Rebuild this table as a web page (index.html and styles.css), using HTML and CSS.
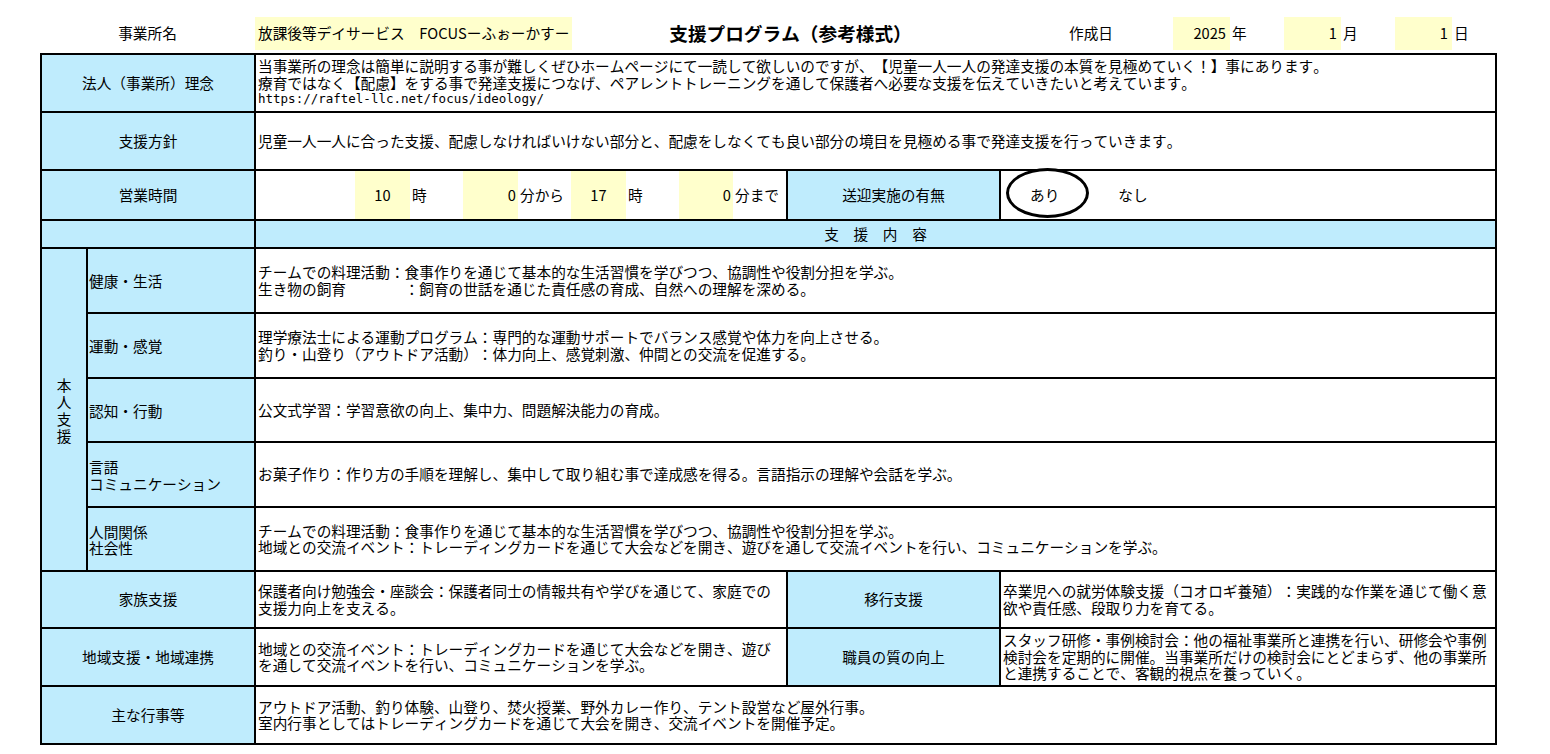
FILE: index.html
```html
<!DOCTYPE html>
<html lang="ja">
<head>
<meta charset="utf-8">
<title>支援プログラム（参考様式）</title>
<link rel="stylesheet" href="styles.css">
</head>
<body>
<div class="header">
  <div class="h-label">事業所名</div>
  <div class="h-name">放課後等デイサービス　FOCUSーふぉーかすー</div>
  <div class="h-title">支援プログラム（参考様式）</div>
  <div class="h-datelabel">作成日</div>
  <div class="h-box">2025</div>
  <div class="h-unit">年</div>
  <div class="h-box">1</div>
  <div class="h-unit">月</div>
  <div class="h-box">1</div>
  <div class="h-unit">日</div>
</div>

<div class="sheet">
  <div class="lbl span2 center">法人（事業所）理念</div>
  <div class="txt span3">当事業所の理念は簡単に説明する事が難しくぜひホームページにて一読して欲しいのですが、【児童一人一人の発達支援の本質を見極めていく！】事にあります。<br>療育ではなく【配慮】をする事で発達支援につなげ、ペアレントトレーニングを通して保護者へ必要な支援を伝えていきたいと考えています。<br><span class="url">https://raftel-llc.net/focus/ideology/</span></div>

  <div class="lbl span2 center">支援方針</div>
  <div class="txt span3">児童一人一人に合った支援、配慮しなければいけない部分と、配慮をしなくても良い部分の境目を見極める事で発達支援を行っていきます。</div>

  <div class="lbl span2 center">営業時間</div>
  <div class="hours">
    <div class="hc blank"></div>
    <div class="hc ybox center">10</div>
    <div class="hc unit">時</div>
    <div class="hc ybox right">0</div>
    <div class="hc unit">分から</div>
    <div class="hc ybox center">17</div>
    <div class="hc unit">時</div>
    <div class="hc ybox right ynarrow">0</div>
    <div class="hc unit">分まで</div>
  </div>
  <div class="lbl center">送迎実施の有無</div>
  <div class="txt pickup">
    <span class="opt">あり</span>
    <span class="opt">なし</span>
    <span class="ring"></span>
  </div>

  <div class="lbl span2"></div>
  <div class="lbl span3 center">支　援　内　容</div>

  <div class="lbl vert">本<br>人<br>支<br>援</div>
  <div class="lbl sub">健康・生活</div>
  <div class="txt span3">チームでの料理活動：食事作りを通じて基本的な生活習慣を学びつつ、協調性や役割分担を学ぶ。<br>生き物の飼育　　　　：飼育の世話を通じた責任感の育成、自然への理解を深める。</div>

  <div class="lbl sub">運動・感覚</div>
  <div class="txt span3">理学療法士による運動プログラム：専門的な運動サポートでバランス感覚や体力を向上させる。<br>釣り・山登り（アウトドア活動）：体力向上、感覚刺激、仲間との交流を促進する。</div>

  <div class="lbl sub">認知・行動</div>
  <div class="txt span3">公文式学習：学習意欲の向上、集中力、問題解決能力の育成。</div>

  <div class="lbl sub">言語<br>コミュニケーション</div>
  <div class="txt span3">お菓子作り：作り方の手順を理解し、集中して取り組む事で達成感を得る。言語指示の理解や会話を学ぶ。</div>

  <div class="lbl sub">人間関係<br>社会性</div>
  <div class="txt span3">チームでの料理活動：食事作りを通じて基本的な生活習慣を学びつつ、協調性や役割分担を学ぶ。<br>地域との交流イベント：トレーディングカードを通じて大会などを開き、遊びを通して交流イベントを行い、コミュニケーションを学ぶ。</div>

  <div class="lbl span2 center">家族支援</div>
  <div class="txt">保護者向け勉強会・座談会：保護者同士の情報共有や学びを通じて、家庭での<br>支援力向上を支える。</div>
  <div class="lbl center">移行支援</div>
  <div class="txt">卒業児への就労体験支援（コオロギ養殖）：実践的な作業を通じて働く意<br>欲や責任感、段取り力を育てる。</div>

  <div class="lbl span2 center">地域支援・地域連携</div>
  <div class="txt">地域との交流イベント：トレーディングカードを通じて大会などを開き、遊び<br>を通して交流イベントを行い、コミュニケーションを学ぶ。</div>
  <div class="lbl center">職員の質の向上</div>
  <div class="txt">スタッフ研修・事例検討会：他の福祉事業所と連携を行い、研修会や事例<br>検討会を定期的に開催。当事業所だけの検討会にとどまらず、他の事業所<br>と連携することで、客観的視点を養っていく。</div>

  <div class="lbl span2 center">主な行事等</div>
  <div class="txt span3">アウトドア活動、釣り体験、山登り、焚火授業、野外カレー作り、テント設営など屋外行事。<br>室内行事としてはトレーディングカードを通じて大会を開き、交流イベントを開催予定。</div>
</div>
</body>
</html>
```

FILE: styles.css
```css
* {
  box-sizing: border-box;
}

html, body {
  margin: 0;
  padding: 0;
  background: #ffffff;
}

body {
  font-family: "Noto Sans CJK JP", "Noto Sans", sans-serif;
  font-size: 14.67px;
  line-height: 16.5px;
  color: #000000;
  width: 1550px;
  height: 754px;
  overflow: hidden;
  text-spacing-trim: space-all;
  font-kerning: none;
}

/* ---------- header line ---------- */
.header {
  display: flex;
  margin: 17px 0 0 40px;
  height: 33px;
  align-items: stretch;
}

.header > div {
  display: flex;
  align-items: center;
}

.h-label {
  width: 215px;
  justify-content: center;
}

.h-name {
  width: 317px;
  background: #ffffcc;
  padding-left: 3px;
}

.h-title {
  width: 437px;
  justify-content: center;
  font-size: 18.67px;
  font-weight: bold;
}

.h-datelabel {
  width: 164px;
  justify-content: center;
}

.h-box {
  width: 57px;
  background: #ffffcc;
  justify-content: flex-end;
  padding-right: 4px;
}

.h-unit {
  width: 54px;
  padding-left: 2px;
}

/* ---------- main sheet ---------- */
.sheet {
  display: grid;
  margin: 3px 0 0 40px;
  width: 1457px;
  grid-template-columns: 44px 166px 530px 211px 494px;
  grid-template-rows: 56px 56px 48px 26px 63px 63px 62px 63px 62px 55px 56px 56px;
  gap: 2px;
  padding: 2px;
  background: #000000;
}

.lbl,
.txt {
  display: flex;
  flex-direction: column;
  justify-content: center;
  white-space: nowrap;
}

.lbl {
  background: #bfecfd;
}

.txt {
  background: #ffffff;
  padding-left: 2px;
}

.span2 {
  grid-column: span 2;
}

.span3 {
  grid-column: span 3;
}

.center {
  align-items: center;
  text-align: center;
}

.sub {
  padding-left: 1px;
  padding-top: 2px;
}

.vert {
  grid-row: span 5;
  align-items: center;
  text-align: center;
  line-height: 17px;
}

.url {
  font-family: "DejaVu Sans Mono", "Liberation Mono", monospace;
  font-size: 12.5px;
}

/* business hours */
.hours {
  display: flex;
  background: #ffffff;
}

.hc {
  display: flex;
  align-items: center;
  width: 53px;
}

.hc.blank {
  width: 99px;
}

.hc.ybox {
  width: 55px;
  background: #ffffcc;
}

.hc.ynarrow {
  width: 54px;
}

.hc.center {
  justify-content: center;
}

.hc.right {
  justify-content: flex-end;
  padding-right: 2px;
}

.hc.unit {
  padding-left: 2px;
}

/* pickup */
.pickup {
  position: relative;
  flex-direction: row;
  align-items: center;
  justify-content: flex-start;
  padding-left: 29px;
  gap: 59px;
}

.ring {
  position: absolute;
  left: 5px;
  top: -3px;
  width: 83px;
  height: 50px;
  border: 3px solid #000000;
  border-radius: 50%;
}
```
